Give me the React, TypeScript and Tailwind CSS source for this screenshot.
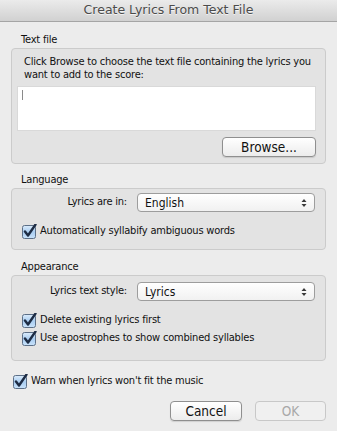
const uiFont = { fontFamily: '"DejaVu Sans Condensed", "DejaVu Sans", sans-serif' };

const Check = () => (
  <svg width="15" height="15" viewBox="0 0 15 15" className="shrink-0">
    <defs>
      <linearGradient id="cb" x1="0" y1="0" x2="0" y2="1">
        <stop offset="0" stopColor="#dcecfb" />
        <stop offset="0.5" stopColor="#a9cdf1" />
        <stop offset="1" stopColor="#c9e2fa" />
      </linearGradient>
    </defs>
    <rect x="0.5" y="1.5" width="13" height="13" rx="2" fill="url(#cb)" stroke="#5c6f87" />
    <path d="M3 7.5 L6 11.5 L13.5 0.5" fill="none" stroke="#1d2c44" strokeWidth="2.4" strokeLinecap="round" strokeLinejoin="round" />
  </svg>
);

const CheckRow = ({ label }: { label: string }) => (
  <div className="flex items-center gap-[3px] h-[18px]">
    <Check />
    <span className="text-[11px] tracking-[-0.2px] text-[#111]">{label}</span>
  </div>
);

const Popup = ({ value }: { value: string }) => (
  <div className="flex items-center justify-between w-[178px] h-[19px] rounded-[4px] border border-[#9d9d9d] bg-gradient-to-b from-white to-[#f1f1f1] pl-[7px] pr-[7px]">
    <span className="text-[12px] text-[#111]">{value}</span>
    <svg width="6" height="10" viewBox="0 0 6 10">
      <path d="M0.5 4 L3 1 L5.5 4 Z M0.5 6 L3 9 L5.5 6 Z" fill="#3a3a3a" />
    </svg>
  </div>
);

const Button = ({ label, disabled, w }: { label: string; disabled?: boolean; w: string }) => (
  <div
    className={`${w} h-[20px] flex items-center justify-center rounded-[4px] border text-[13.5px] ${
      disabled
        ? "border-[#c8c8c8] bg-[#f0f0f0] text-[#a8a8a8]"
        : "border-[#8f8f8f] bg-gradient-to-b from-white to-[#ececec] text-[#111] shadow-[0_1px_1px_rgba(0,0,0,0.12)]"
    }`}
  >
    {label}
  </div>
);

const Group = ({ title, children, className }: { title: string; children: React.ReactNode; className: string }) => (
  <div>
    <div className="pl-[10px] h-[16px] text-[11px] tracking-[-0.2px] leading-[16px] text-[#111]">{title}</div>
    <div className={`rounded-[4px] border border-[#cbcbcb] bg-[#e3e3e3] ${className}`}>{children}</div>
  </div>
);

export default function App() {
  return (
    <div className="w-[337px] h-[431px] bg-[#ececec] overflow-hidden flex flex-col font-stretch-condensed" style={uiFont}>
      <div className="h-[22px] shrink-0 flex items-center justify-center border-b border-[#a5a5a5] bg-gradient-to-b from-[#ebebeb] to-[#d1d1d1]">
        <span
          className="text-[12.5px] text-[#4b4b4b] [text-shadow:0_1px_0_rgba(255,255,255,0.7)] font-stretch-normal"
          style={{ fontFamily: '"DejaVu Sans", sans-serif' }}
        >
          Create Lyrics From Text File
        </span>
      </div>

      <div className="px-[11px] pt-[10px] flex flex-col">
        <Group title="Text file" className="h-[116px] pl-[5px] pr-[9px] pt-[6px] flex flex-col">
          <p className="pl-[7px] -mr-[4px] text-[11px] tracking-[-0.2px] leading-[13px] text-[#111]">
            Click Browse to choose the text file containing the lyrics you want to add to the score:
          </p>
          <div className="mt-[5px] h-[45px] bg-white border border-[#d9d9d9] relative">
            <div className="absolute left-[4px] top-[3px] w-px h-[10px] bg-[#8a8a8a]" />
          </div>
          <div className="mt-[6px] flex justify-end">
            <Button label="Browse..." w="w-[94px]" />
          </div>
        </Group>

        <div className="mt-[8px]">
          <Group title="Language" className="h-[62px] pt-[4px] px-[10px]">
            <div className="flex items-center">
              <span className="w-[117px] text-right text-[11px] tracking-[-0.2px] text-[#111]">Lyrics are in:</span>
              <div className="ml-[10px]">
                <Popup value="English" />
              </div>
            </div>
            <div className="mt-[10px]">
              <CheckRow label="Automatically syllabify ambiguous words" />
            </div>
          </Group>
        </div>

        <div className="mt-[9px]">
          <Group title="Appearance" className="h-[86px] pt-[6px] px-[10px]">
            <div className="flex items-center">
              <span className="w-[117px] text-right text-[11px] tracking-[-0.2px] text-[#111]">Lyrics text style:</span>
              <div className="ml-[10px]">
                <Popup value="Lyrics" />
              </div>
            </div>
            <div className="mt-[10px] flex flex-col">
              <CheckRow label="Delete existing lyrics first" />
              <CheckRow label="Use apostrophes to show combined syllables" />
            </div>
          </Group>
        </div>

        <div className="mt-[11px] pl-[2px]">
          <CheckRow label="Warn when lyrics won't fit the music" />
        </div>

        <div className="mt-[11px] flex justify-end gap-[13px]">
          <Button label="Cancel" w="w-[72px]" />
          <Button label="OK" w="w-[71px]" disabled />
        </div>
      </div>
    </div>
  );
}
